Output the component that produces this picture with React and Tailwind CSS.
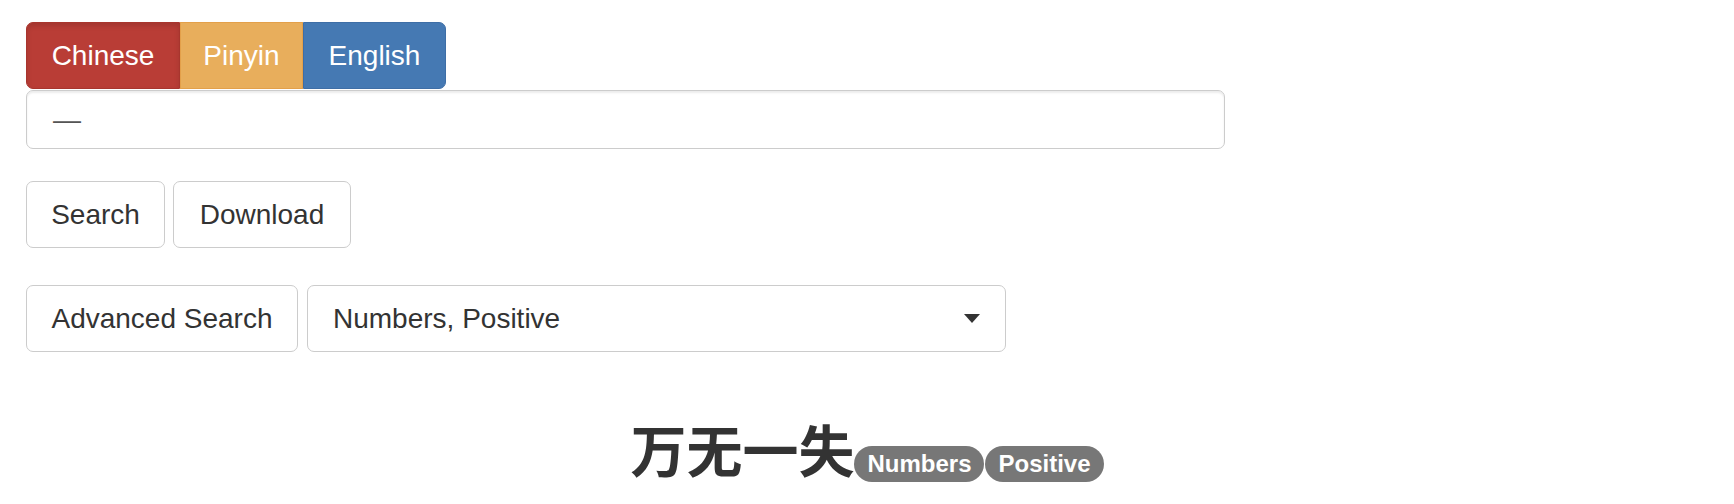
import React from 'react';

const Tab = ({ label, className }) => (
    <div className={`h-[67px] flex items-center justify-center border text-white ${className}`}>
        {label}
    </div>
);

const Btn = ({ children, className = '' }) => (
    <div className={`h-[67px] flex items-center border border-[#ccc] rounded-[7px] bg-white text-[#333] ${className}`}>
        {children}
    </div>
);

const App = () => {
    return (
        <div className="min-h-[504px] bg-white px-[26px] pt-[22px] text-[28px] text-[#333] font-['Liberation_Sans','Noto_Sans_CJK_SC',sans-serif]">
            {/* language tabs */}
            <div className="flex">
                <Tab label="Chinese" className="w-[154px] bg-[#b93d36] border-[#a8352e] rounded-l-[7px] shadow-[inset_0_3px_5px_rgba(0,0,0,0.12)]" />
                <Tab label="Pinyin" className="w-[123px] bg-[#e8ae5c] border-[#e3a04a]" />
                <Tab label="English" className="w-[143px] bg-[#4579b3] border-[#3e6ea6] rounded-r-[7px]" />
            </div>

            {/* query input */}
            <div className="mt-px w-[1199px] h-[59px] flex items-center px-[26px] border border-[#ccc] rounded-[7px] text-[#555] shadow-[inset_0_2px_2px_rgba(0,0,0,0.075)]">
                —
            </div>

            <div className="mt-[32px] flex gap-[8px]">
                <Btn className="w-[139px] justify-center">Search</Btn>
                <Btn className="w-[178px] justify-center">Download</Btn>
            </div>

            <div className="mt-[37px] flex gap-[9px]">
                <Btn className="w-[272px] justify-center">Advanced Search</Btn>
                <Btn className="w-[699px] justify-between pl-[25px] pr-[25px]">
                    <span>Numbers, Positive</span>
                    <svg width="16" height="9" viewBox="0 0 16 9">
                        <path d="M0 0 L16 0 L8 9 Z" fill="#333" />
                    </svg>
                </Btn>
            </div>

            <div className="mt-[70px] text-center">
                <span className="text-[56px] leading-[62px] font-bold">万无一失</span>
                <span className="inline-block rounded-full bg-[#777] text-white text-[24px] leading-[24px] font-bold px-[13px] py-[6px]">Numbers</span>
                <span className="inline-block rounded-full bg-[#777] text-white text-[24px] leading-[24px] font-bold px-[13px] py-[6px] ml-px">Positive</span>
            </div>
        </div>
    );
};

export default App;
